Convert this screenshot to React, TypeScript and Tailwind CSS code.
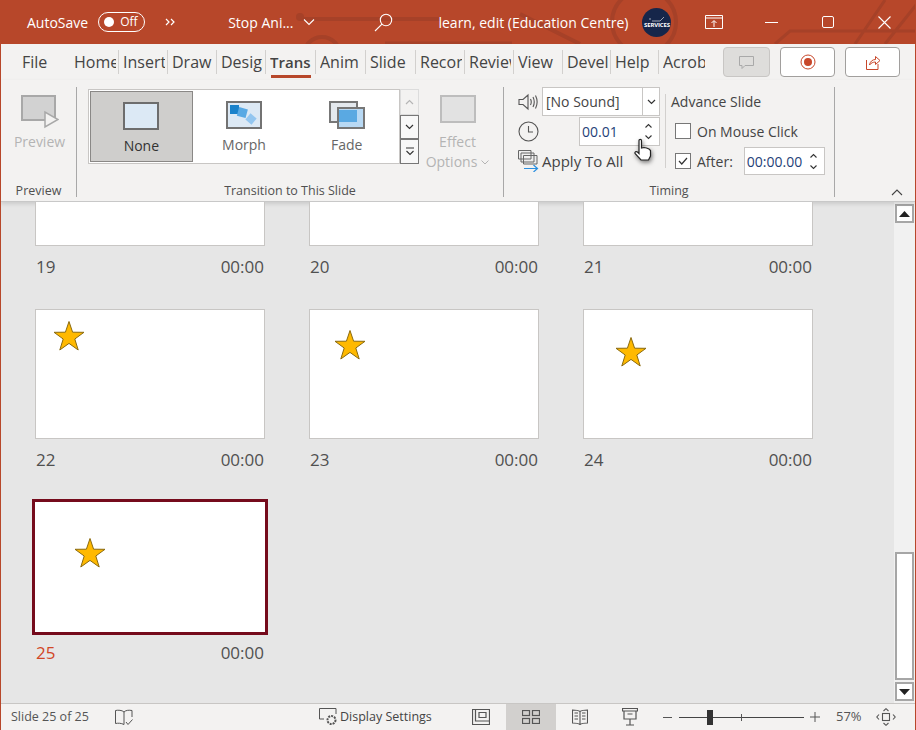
import type { ReactNode } from 'react'

const FONT = "font-['Open_Sans','Noto_Sans',sans-serif]"

const TABS = [
  { label: 'Home', box: 'w-[44px]' },
  { label: 'Insert', box: 'w-[49px]' },
  { label: 'Draw', box: 'w-[49px]' },
  { label: 'Design', box: 'w-[49px]' },
  { label: 'Trans', box: 'w-[50px]' },
  { label: 'Anim', box: 'w-[50px]' },
  { label: 'Slide', box: 'w-[50px]' },
  { label: 'Record', box: 'w-[49px]' },
  { label: 'Review', box: 'w-[49px]' },
  { label: 'View', box: 'w-[49px]' },
  { label: 'Devel', box: 'w-[48px]' },
  { label: 'Help', box: 'w-[48px]' },
  { label: 'Acrobat', box: 'w-[48px]' },
]

const Star = ({ className }: { className: string }) => (
  <svg viewBox="0 0 34 34" className={`absolute h-[34px] w-[34px] ${className}`}>
    <path d="M17 2.5 20.6 13.2 32 13.3 22.8 20 26.2 31 17 24.4 7.8 31 11.2 20 2 13.3 13.4 13.2Z" fill="#ffb900" stroke="#8a6a10" strokeWidth="1" />
  </svg>
)

const SlideLabel = ({ n, active }: { n: number; active?: boolean }) => (
  <div className="flex w-[229px] justify-between pl-px text-[17px] leading-[24px] text-[#505050]">
    <span className={active ? 'text-[#d24726]' : ''}>{n}</span>
    <span>00:00</span>
  </div>
)

const Spin = () => (
  <div className="flex flex-col items-center gap-[5px] text-[#333]">
    <svg width="9" height="6" viewBox="0 0 9 6" fill="none" stroke="currentColor" strokeWidth="1.1"><path d="M1.5 4.5 4.5 1.5 7.5 4.5" /></svg>
    <svg width="9" height="6" viewBox="0 0 9 6" fill="none" stroke="currentColor" strokeWidth="1.1"><path d="M1.5 1.5 4.5 4.5 7.5 1.5" /></svg>
  </div>
)

const GroupLabel = ({ children }: { children: ReactNode }) => (
  <div className="absolute inset-x-0 bottom-[-2px] text-center text-[12.500px] leading-[16px] text-[#505050]">{children}</div>
)

const ScrollBtn = ({ up }: { up?: boolean }) => (
  <div className="flex h-[19px] w-[19px] items-center justify-center border-2 border-[#a6a6a6] bg-white">
    <svg width="11" height="6" viewBox="0 0 11 6" fill="#222"><path d={up ? 'M5.5 0 11 6H0Z' : 'M0 0H11L5.5 6Z'} /></svg>
  </div>
)

const TitleBar = () => (
  <div className="relative flex h-[44px] shrink-0 items-center overflow-hidden bg-[#b7472a] text-white">
    {/* circuit pattern */}
    <svg className="absolute inset-0" width="916" height="44" fill="none" stroke="#a64128" strokeWidth="4">
      <path d="M300 19H440" />
      <circle cx="300" cy="17" r="4" fill="#a64128" strokeWidth="0" />
      <circle cx="322" cy="55" r="18" strokeWidth="4" />
      <path d="M385 43H512" strokeWidth="3" />
      <path d="M520 14 580 44" strokeWidth="4" />
      <circle cx="644" cy="22" r="32" strokeWidth="4" />
      <path d="M775 44 790 31H916M855 44 885 0M885 44 916 5" strokeWidth="3" />
    </svg>
    <span className="relative ml-[27px] text-[14px]">AutoSave</span>
    <div className="relative ml-[10px] flex h-[20px] w-[47px] items-center rounded-full border border-white pl-[5px]">
      <span className="h-[10px] w-[10px] rounded-full bg-white" />
      <span className="ml-[6px] text-[12px]">Off</span>
    </div>
    <svg className="relative ml-[20px]" width="10" height="8" viewBox="0 0 10 8" fill="none" stroke="white" strokeWidth="1.2"><path d="M1 1 4 4 1 7M6 1 9 4 6 7" /></svg>
    <span className="relative ml-[53px] text-[14px]">Stop Ani...</span>
    <svg className="relative ml-[10px]" width="12" height="8" viewBox="0 0 12 8" fill="none" stroke="white" strokeWidth="1.1"><path d="M1 1.5 6 6.5 11 1.5" /></svg>
    <svg className="relative ml-[59px]" width="19" height="19" viewBox="0 0 19 19" fill="none" stroke="white" strokeWidth="1.1"><circle cx="12" cy="7" r="5.7" /><path d="M8 11.2 1 18" /></svg>
    <span className="relative ml-[45px] text-[14px]">learn, edit (Education Centre)</span>
    <div className="relative ml-[14px] flex h-[29px] w-[29px] flex-col items-center justify-center rounded-full bg-[#16264a] text-[6px] font-bold leading-[7px] tracking-tight">
      <svg width="16" height="6" viewBox="0 0 16 6" fill="none" stroke="white" strokeWidth=".6"><path d="M1 2V4M3 5H11L15 1" /></svg>
      SERVICES
    </div>
    <svg className="relative ml-[34px]" width="18" height="14" viewBox="0 0 18 14" fill="none" stroke="white"><path d="M.5.5H17.5V13.5H.5ZM.5 3H17.5M9 12V6M6.5 8 9 5.5 11.5 8" /></svg>
    <div className="relative ml-[42px] h-px w-[13px] bg-white" />
    <div className="relative ml-[44px] h-[12px] w-[12px] rounded-[2px] border border-white" />
    <svg className="relative ml-[44px]" width="13" height="13" viewBox="0 0 13 13" stroke="white" strokeWidth="1.1"><path d="M.5.5 12.5 12.5M12.5.5.5 12.5" /></svg>
  </div>
)

const TabRow = () => (
  <div className="flex h-[36px] shrink-0 items-center text-[#444]">
    <span className="ml-[21px] w-[52px] text-[16px]">File</span>
    {TABS.map((tab, i) => (
      <div key={tab.label} className={`relative flex h-[24px] items-center ${tab.box} ${i > 0 ? 'border-l border-[#d2d0ce] pl-[4px]' : ''}`}>
        <span className={`block w-[42px] overflow-hidden whitespace-nowrap leading-[24px] ${tab.label === 'Trans' ? 'text-[15px] font-semibold' : 'text-[16px]'}`}>{tab.label}</span>
        {tab.label === 'Trans' && <div className="absolute bottom-[-4px] left-[5px] h-[3px] w-[40px] bg-[#b7472a]" />}
      </div>
    ))}
    <div className="ml-[17px] flex h-[30px] w-[47px] items-center justify-center rounded-[4px] border border-[#c8c6c4] bg-[#dedddb]">
      <svg width="15" height="15" viewBox="0 0 15 15" fill="none" stroke="#a9a9a9"><path d="M.5 1.5H14.5V10.5H6L3 13.5V10.5H.5Z" /></svg>
    </div>
    <div className="ml-[10px] flex h-[30px] w-[55px] items-center justify-center rounded-[4px] border border-[#a19f9d] bg-white">
      <svg width="16" height="16" viewBox="0 0 16 16" fill="none"><circle cx="8" cy="8" r="7" stroke="#c8472a" /><circle cx="8" cy="8" r="4" fill="#c8472a" /></svg>
    </div>
    <div className="ml-[10px] flex h-[30px] w-[55px] items-center justify-center rounded-[4px] border border-[#a19f9d] bg-white">
      <svg width="16" height="15" viewBox="0 0 16 15" fill="none" stroke="#c8472a"><path d="M1.5 5V14.5H13V9M4.5 10C5 6.5 7.5 4.5 10.5 4.5V1.5L15 5.5 10.5 9.5V7C8 7 6 8 4.5 10Z" /></svg>
    </div>
  </div>
)

const TransitionThumb = ({ label, active, children }: { label: string; active?: boolean; children: ReactNode }) => (
  <div className={`flex h-[71px] w-[103px] flex-col items-center pt-[10px] text-[14px] ${active ? 'border border-[#8a8886] bg-[#cfcecc] text-[#333]' : 'text-[#666]'}`}>
    <div className="relative h-[28px] w-[36px]">{children}</div>
    <span className="mt-[6px] leading-[20px]">{label}</span>
  </div>
)

const Gallery = () => (
  <div className="ml-[11px] mt-[9px] flex h-[75px] w-[331px] shrink-0">
    <div className="flex h-[75px] w-[312px] border border-[#c8c6c4] bg-white p-px">
      <TransitionThumb label="None" active>
        <div className="h-full w-full border-2 border-[#6d6d6d] bg-[#dce9f5]" />
      </TransitionThumb>
      <TransitionThumb label="Morph">
        <svg width="36" height="28" viewBox="0 0 36 28">
          <rect x="1" y="1" width="34" height="26" fill="#dce9f5" stroke="#737373" strokeWidth="2" />
          <rect x="4" y="4" width="9" height="9" fill="#1a82cb" />
          <rect x="12" y="7" width="9" height="9" fill="#58a9e4" transform="rotate(15 16 11)" />
          <rect x="21" y="14" width="8" height="8" fill="#93c6f0" transform="rotate(40 25 18)" />
        </svg>
      </TransitionThumb>
      <TransitionThumb label="Fade">
        <svg width="36" height="28" viewBox="0 0 36 28">
          <rect x="1" y="1" width="27" height="20" fill="#e4e9ee" stroke="#777" strokeWidth="2" />
          <rect x="9" y="7" width="26" height="20" fill="#b8d9f4" stroke="#777" strokeWidth="2" />
          <rect x="10" y="9" width="18" height="12" fill="#5aa9e2" />
        </svg>
      </TransitionThumb>
    </div>
    <div className="flex w-[19px] flex-col text-[#333]">
      <div className="flex h-[26px] items-center justify-center border border-[#dcdcdc] bg-[#f3f2f1] text-[#b5b5b5]">
        <svg width="9" height="6" viewBox="0 0 9 6" fill="none" stroke="currentColor" strokeWidth="1.2"><path d="M1 5 4.5 1.5 8 5" /></svg>
      </div>
      <div className="flex h-[24px] items-center justify-center border border-[#777] bg-[#f8f8f8]">
        <svg width="9" height="6" viewBox="0 0 9 6" fill="none" stroke="currentColor" strokeWidth="1.2"><path d="M1 1 4.5 4.5 8 1" /></svg>
      </div>
      <div className="flex h-[25px] items-center justify-center border border-[#777] bg-[#f8f8f8]">
        <svg width="10" height="9" viewBox="0 0 10 9" fill="none" stroke="currentColor" strokeWidth="1.1"><path d="M1 1H9M1.5 4 5 7.5 8.500 4" /></svg>
      </div>
    </div>
  </div>
)

const Timing = () => (
  <div className="relative h-[110px] w-[331px] shrink-0 border-r border-[#a8a8a8] pl-[14px]">
    <div className="flex">
      <div className="flex w-[142px] flex-col text-[14px] text-[#444]">
        <div className="flex h-[29px] items-center">
          <svg width="20" height="20" viewBox="0 0 20 20" fill="none" stroke="#555" strokeWidth="1.1"><path d="M1 7.500H5L10 3V17L5 12.500H1ZM12.500 7C13.500 9 13.500 11 12.500 13M15 5C16.500 8 16.500 12 15 15M17.500 3.500C19.500 7.500 19.500 12.500 17.500 16.500" /></svg>
          <div className="ml-[4px] flex h-[29px] w-[118px] border border-[#c8c6c4] bg-white">
            <span className="flex-1 border-r border-[#c8c6c4] pl-[3px] text-[14px] leading-[27px]">[No Sound]</span>
            <div className="flex w-[16px] items-center justify-center">
              <svg width="9" height="6" viewBox="0 0 9 6" fill="none" stroke="#333" strokeWidth="1.2"><path d="M1 1 4.500 4.500 8 1" /></svg>
            </div>
          </div>
        </div>
        <div className="mt-[1px] flex h-[29px] items-center">
          <svg width="21" height="21" viewBox="0 0 21 21" fill="none" stroke="#555" strokeWidth="1.1"><circle cx="10.500" cy="10.500" r="9.500" /><path d="M10.500 5V11H15" /></svg>
          <div className="ml-[40px] flex h-[29px] w-[81px] items-center justify-between border border-[#c8c6c4] bg-white pl-[2px] pr-[6px]">
            <span className="text-[14px] text-[#1f3f78]">00.01</span>
            <Spin />
          </div>
        </div>
        <div className="mt-[1px] flex h-[28px] items-center">
          <svg width="21" height="22" viewBox="0 0 21 22" fill="none"><path d="M.5.5H13V9H.5ZM3 3H16V12H3ZM5.500 5.500H19V14H5.500Z" stroke="#666" fill="#eee" /><path d="M6 18.500H19M15.500 15 19.500 18.500 15.500 22" stroke="#2a8fe0" strokeWidth="1.200" /></svg>
          <span className="ml-[3px] text-[15px]">Apply To All</span>
        </div>
      </div>
      <div className="ml-[5px] mt-[7px] h-[74px] w-px bg-[#d2d0ce]" />
      <div className="ml-[5px] flex flex-col text-[14px] text-[#444]">
        <div className="flex h-[29px] items-center">Advance Slide</div>
        <div className="mt-[2px] flex h-[26px] items-center pl-[4px]">
          <div className="h-[16px] w-[16px] border border-[#777] bg-white" />
          <span className="ml-[6px]">On Mouse Click</span>
        </div>
        <div className="mt-[3px] flex h-[28px] items-center pl-[4px]">
          <div className="flex h-[16px] w-[16px] items-center justify-center border border-[#777] bg-white">
            <svg width="10" height="8" viewBox="0 0 10 8" fill="none" stroke="#333" strokeWidth="1.200"><path d="M1 4 3.800 7 9 1" /></svg>
          </div>
          <span className="ml-[6px]">After:</span>
          <div className="ml-[11px] flex h-[28px] w-[81px] items-center justify-between border border-[#c8c6c4] bg-white pl-[2px] pr-[6px]">
            <span className="text-[14px] text-[#1f3f78]">00:00.00</span>
            <Spin />
          </div>
        </div>
      </div>
    </div>
    <GroupLabel>Timing</GroupLabel>
  </div>
)

const Ribbon = () => (
  <div className="relative flex h-[122px] shrink-0 items-start border-b border-[#c8c8c8] pt-[7px] shadow-[0_2px_4px_rgba(0,0,0,0.12)]">
    <div className="relative h-[110px] w-[76px] shrink-0 border-r border-[#a8a8a8]">
      <div className="flex flex-col items-center pl-[2px] pt-[8px] text-[14px] text-[#b4b4b4]">
        <svg width="38" height="34" viewBox="0 0 38 34" fill="none">
          <rect x="1" y="1" width="33" height="24" fill="#d2d2d2" stroke="#a8a8a8" strokeWidth="2" />
          <path d="M24 17V32L37 24.500Z" fill="#f3f2f1" stroke="#a8a8a8" strokeWidth="1.500" />
        </svg>
        <span className="mt-[3px] leading-[20px]">Preview</span>
      </div>
      <GroupLabel>Preview</GroupLabel>
    </div>
    <div className="relative flex h-[110px] w-[427px] shrink-0 border-r border-[#a8a8a8]">
      <div className="-mt-[7px] flex">
        <Gallery />
        <div className="ml-[2px] flex w-[73px] flex-col items-center pt-[15px] text-[14px] leading-[20px] text-[#b4b4b4]">
          <div className="h-[28px] w-[36px] border-2 border-[#bdbdbd] bg-[#e2e2e2]" />
          <span className="mt-[9px]">Effect</span>
          <span className="flex items-center">
            Options
            <svg className="ml-[4px]" width="8" height="5" viewBox="0 0 8 5" fill="none" stroke="currentColor"><path d="M.5.5 4 4 7.500.5" /></svg>
          </span>
        </div>
      </div>
      <GroupLabel>Transition to This Slide</GroupLabel>
    </div>
    <Timing />
    {/* collapse ribbon */}
    <svg className="absolute bottom-[5px] right-[12px]" width="12" height="7" viewBox="0 0 12 7" fill="none" stroke="#444" strokeWidth="1.100"><path d="M1 6 6 1 11 6" /></svg>
  </div>
)

const SlideThumb = ({ star, h = 'h-[130px]', clipped }: { star?: string; h?: string; clipped?: boolean }) => (
  <div className={`relative w-[230px] ${h} border border-[#c8c6c4] bg-white ${clipped ? 'border-t-0' : ''}`}>
    {star && <Star className={star} />}
  </div>
)

const SlideGrid = () => (
  <div className="flex-1 overflow-hidden pl-[34px]">
    <div className="grid w-[778px] grid-cols-[230px_230px_230px] gap-x-[44px]">
      {[19, 20, 21].map((n) => (
        <div key={n}>
          <SlideThumb h="h-[44px]" clipped />
          <div className="mt-[9px]"><SlideLabel n={n} /></div>
        </div>
      ))}
    </div>
    <div className="mt-[30px] grid w-[778px] grid-cols-[230px_230px_230px] gap-x-[44px]">
      <div><SlideThumb star="left-[16px] top-[9px]" /><div className="mt-[9px]"><SlideLabel n={22} /></div></div>
      <div><SlideThumb star="left-[23px] top-[18px]" /><div className="mt-[9px]"><SlideLabel n={23} /></div></div>
      <div><SlideThumb star="left-[30px] top-[25px]" /><div className="mt-[9px]"><SlideLabel n={24} /></div></div>
    </div>
    <div className="-ml-[3px] mt-[27px]">
      <div className="relative h-[136px] w-[236px] border-[3px] border-[#750b1c] bg-white">
        <Star className="left-[38px] top-[34px]" />
      </div>
      <div className="ml-[3px] mt-[6px]"><SlideLabel n={25} active /></div>
    </div>
  </div>
)

const Scrollbar = () => (
  <div className="flex w-[21px] shrink-0 flex-col items-center bg-[#f1f1f1] pt-[2px]">
    <ScrollBtn up />
    <div className="mt-[329px] h-[128px] w-[19px] border-2 border-[#a6a6a6] bg-white" />
    <div className="flex-1" />
    <div className="mb-[2px]"><ScrollBtn /></div>
  </div>
)

const StatusBar = () => (
  <div className="flex h-[27px] shrink-0 items-center border-t border-[#c8c6c4] text-[12.500px] text-[#555]">
    <span className="ml-[10px] w-[104px]">Slide 25 of 25</span>
    <svg width="18" height="17" viewBox="0 0 18 17" fill="none" stroke="#555"><path d="M9 3C7 1 3 1 .5 1.500V14.500C3 14 6 14 9 15.500V3C11 1 14 1 17 1.500V8M11 13 13 15.500 17.500 10.500" /></svg>
    <svg className="ml-[186px]" width="19" height="18" viewBox="0 0 19 18" fill="none" stroke="#555"><path d="M5 11H.5V.5H17V6" /><circle cx="12.500" cy="12" r="4" strokeWidth="2" strokeDasharray="2 1" /></svg>
    <span className="ml-[2px] w-[132px] text-[#444]">Display Settings</span>
    <svg width="18" height="16" viewBox="0 0 18 16" fill="none" stroke="#555" strokeWidth="1.200"><path d="M.5.500H17.500V15.500H.5ZM3.500.500V12H17.500M7 3.500H14V8.500H7Z" /></svg>
    <div className="ml-[16px] flex h-[26px] w-[50px] items-center justify-center bg-[#d2d0ce]">
      <svg width="18" height="14" viewBox="0 0 18 14" fill="none" stroke="#555" strokeWidth="1.200"><rect x=".5" y=".5" width="7" height="5" /><rect x="10.500" y=".5" width="7" height="5" /><rect x=".5" y="8.500" width="7" height="5" /><rect x="10.500" y="8.500" width="7" height="5" /></svg>
    </div>
    <svg className="ml-[16px]" width="16" height="16" viewBox="0 0 16 16" fill="none" stroke="#555" strokeWidth="1.100"><path d="M8 2.500C6 1 3 1 .5 1V14C3 14 6 14 8 15.500 10 14 13 14 15.500 14V1C13 1 10 1 8 2.500ZM8 2.500V15M2.500 4H6M2.500 7H6M2.500 10H6M10 4H13.500M10 7H13.500M10 10H13.500" /></svg>
    <svg className="ml-[34px]" width="16" height="18" viewBox="0 0 16 18" fill="none" stroke="#555" strokeWidth="1.200"><path d="M.5.500H15.500V3H.5ZM2 3V11H14V3M8 11V17M4 17H12M5.500 6H10.500" /></svg>
    <div className="ml-[25px] h-px w-[9px] bg-[#555]" />
    <div className="relative ml-[7px] h-px w-[125px] bg-[#444]">
      <div className="absolute left-[28px] top-[-7px] h-[15px] w-[6px] bg-[#333]" />
      <div className="absolute left-[62px] top-[-3px] h-[7px] w-px bg-[#555]" />
    </div>
    <svg className="ml-[6px]" width="10" height="10" viewBox="0 0 10 10" stroke="#555"><path d="M5 0V10M0 5H10" /></svg>
    <span className="ml-[16px] text-[13px] text-[#555]">57%</span>
    <svg className="ml-[14px]" width="20" height="18" viewBox="0 0 20 18" fill="none" stroke="#555" strokeWidth="1.100"><rect x="6.500" y="5.500" width="7" height="7" /><path d="M7.500 3 10 .7 12.500 3M7.500 15 10 17.300 12.500 15M3 6.500.8 9 3 11.500M17 6.500 19.200 9 17 11.500" /></svg>
  </div>
)

export default function App() {
  return (
    <div className={`flex h-[730px] w-[916px] flex-col overflow-hidden border-x border-[#b7472a] bg-[#f3f2f1] ${FONT}`}>
      <div className="-mx-px flex h-[44px] shrink-0 flex-col"><TitleBar /></div>
      <TabRow />
      <Ribbon />
      <div className="flex min-h-0 flex-1 bg-[#e6e6e6]">
        <SlideGrid />
        <Scrollbar />
      </div>
      <StatusBar />
      {/* mouse pointer over the spinner */}
      <svg className="absolute left-[633px] top-[138px] drop-shadow-[1px_2px_2px_rgba(0,0,0,0.5)]" width="20" height="24" viewBox="0 0 20 24">
        <path d="M6 2.500C6 1 8.500 1 8.500 2.500V10L11 9.500 13.500 10 16 11 17.500 12.500V18L15.500 22H8L2 15.500C1.500 14 3 13 4.500 14L6 15.500Z" fill="white" stroke="#222" strokeWidth="1.200" />
      </svg>
    </div>
  )
}
